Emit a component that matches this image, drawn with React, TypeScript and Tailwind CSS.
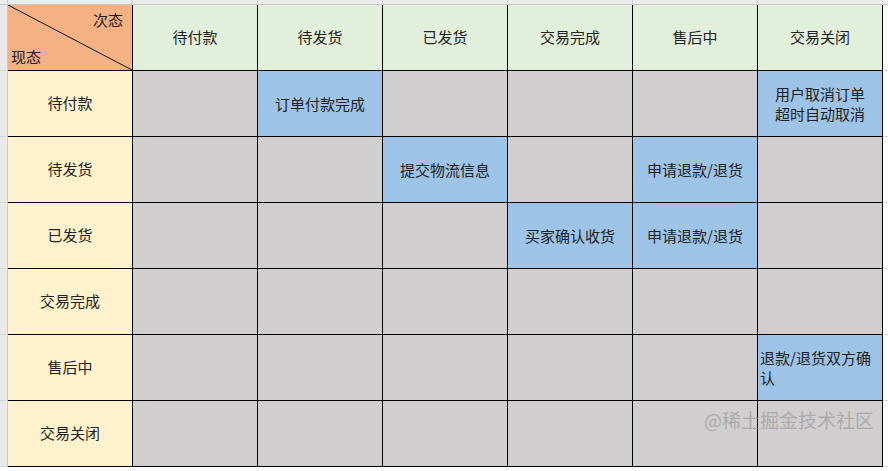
const cols = ["待付款", "待发货", "已发货", "交易完成", "售后中", "交易关闭"];

type Cell = { text?: string; align?: "left" };

const rows: { name: string; cells: Record<number, Cell> }[] = [
  { name: "待付款", cells: { 1: { text: "订单付款完成" }, 5: { text: "用户取消订单\n超时自动取消" } } },
  { name: "待发货", cells: { 2: { text: "提交物流信息" }, 4: { text: "申请退款/退货" } } },
  { name: "已发货", cells: { 3: { text: "买家确认收货" }, 4: { text: "申请退款/退货" } } },
  { name: "交易完成", cells: {} },
  { name: "售后中", cells: { 5: { text: "退款/退货双方确认", align: "left" } } },
  { name: "交易关闭", cells: {} },
];

export default function App() {
  return (
    <div
      className="relative h-[471px] w-[888px] overflow-hidden bg-white text-[15px] text-[#222]"
      style={{ fontFamily: '"Noto Sans CJK SC", "Noto Sans", sans-serif' }}
    >
      {/* spreadsheet column header strip */}
      <div className="flex h-[5px] border-b border-[#c8c8c8] bg-[#ececec]">
        <div className="w-[8px] border-r border-[#c8c8c8]" />
        {Array.from({ length: 7 }).map((_, i) => (
          <div key={i} className="w-[125px] border-r border-[#d4d4d4]" />
        ))}
      </div>

      <div className="flex">
        <div className="flex w-[8px] flex-col border-r border-[#c8c8c8] bg-[#e9e9e9]">
          {Array.from({ length: 7 }).map((_, i) => (
            <div key={i} className="h-[66px] border-b border-[#d4d4d4]" />
          ))}
        </div>

        <div className="grid grid-cols-[repeat(7,125px)] grid-rows-[repeat(7,66px)]">
          <div className="relative border-b border-r border-black bg-[#f4b183]">
            <svg className="absolute inset-0" width="124" height="65" viewBox="0 0 124 65">
              <line x1="0" y1="0" x2="124" y2="65" stroke="#111" strokeWidth="1" />
            </svg>
            <span className="absolute right-[9px] top-[7px] leading-none">次态</span>
            <span className="absolute bottom-[6px] left-[3px] leading-none">现态</span>
          </div>
          {cols.map((c) => (
            <div
              key={c}
              className="flex items-center justify-center border-b border-r border-black bg-[#e2efda]"
            >
              {c}
            </div>
          ))}

          {rows.map((r) => (
            <>
              <div
                key={r.name}
                className="flex items-center justify-center border-b border-r border-black bg-[#fff2cc]"
              >
                {r.name}
              </div>
              {cols.map((_, ci) => {
                const cell = r.cells[ci];
                if (!cell) {
                  return (
                    <div key={r.name + ci} className="border-b border-r border-black bg-[#d0cece]" />
                  );
                }
                return (
                  <div
                    key={r.name + ci}
                    className={
                      cell.align === "left"
                        ? "flex items-center whitespace-pre-line border-b border-r border-black bg-[#9dc3e6] pl-[2px] pr-[2px] leading-[20px]"
                        : "flex items-center justify-center whitespace-pre-line border-b border-r border-black bg-[#9dc3e6] text-center leading-[20px]"
                    }
                  >
                    {cell.text}
                  </div>
                );
              })}
            </>
          ))}
        </div>

        <div className="flex flex-1 flex-col">
          {Array.from({ length: 7 }).map((_, i) => (
            <div key={i} className="h-[66px] border-b border-[#dcdcdc]" />
          ))}
        </div>
      </div>

      <div className="pointer-events-none absolute right-[14px] top-[410px] text-[19px] leading-none text-[#9a9a9a]/70">
        @稀土掘金技术社区
      </div>
    </div>
  );
}
